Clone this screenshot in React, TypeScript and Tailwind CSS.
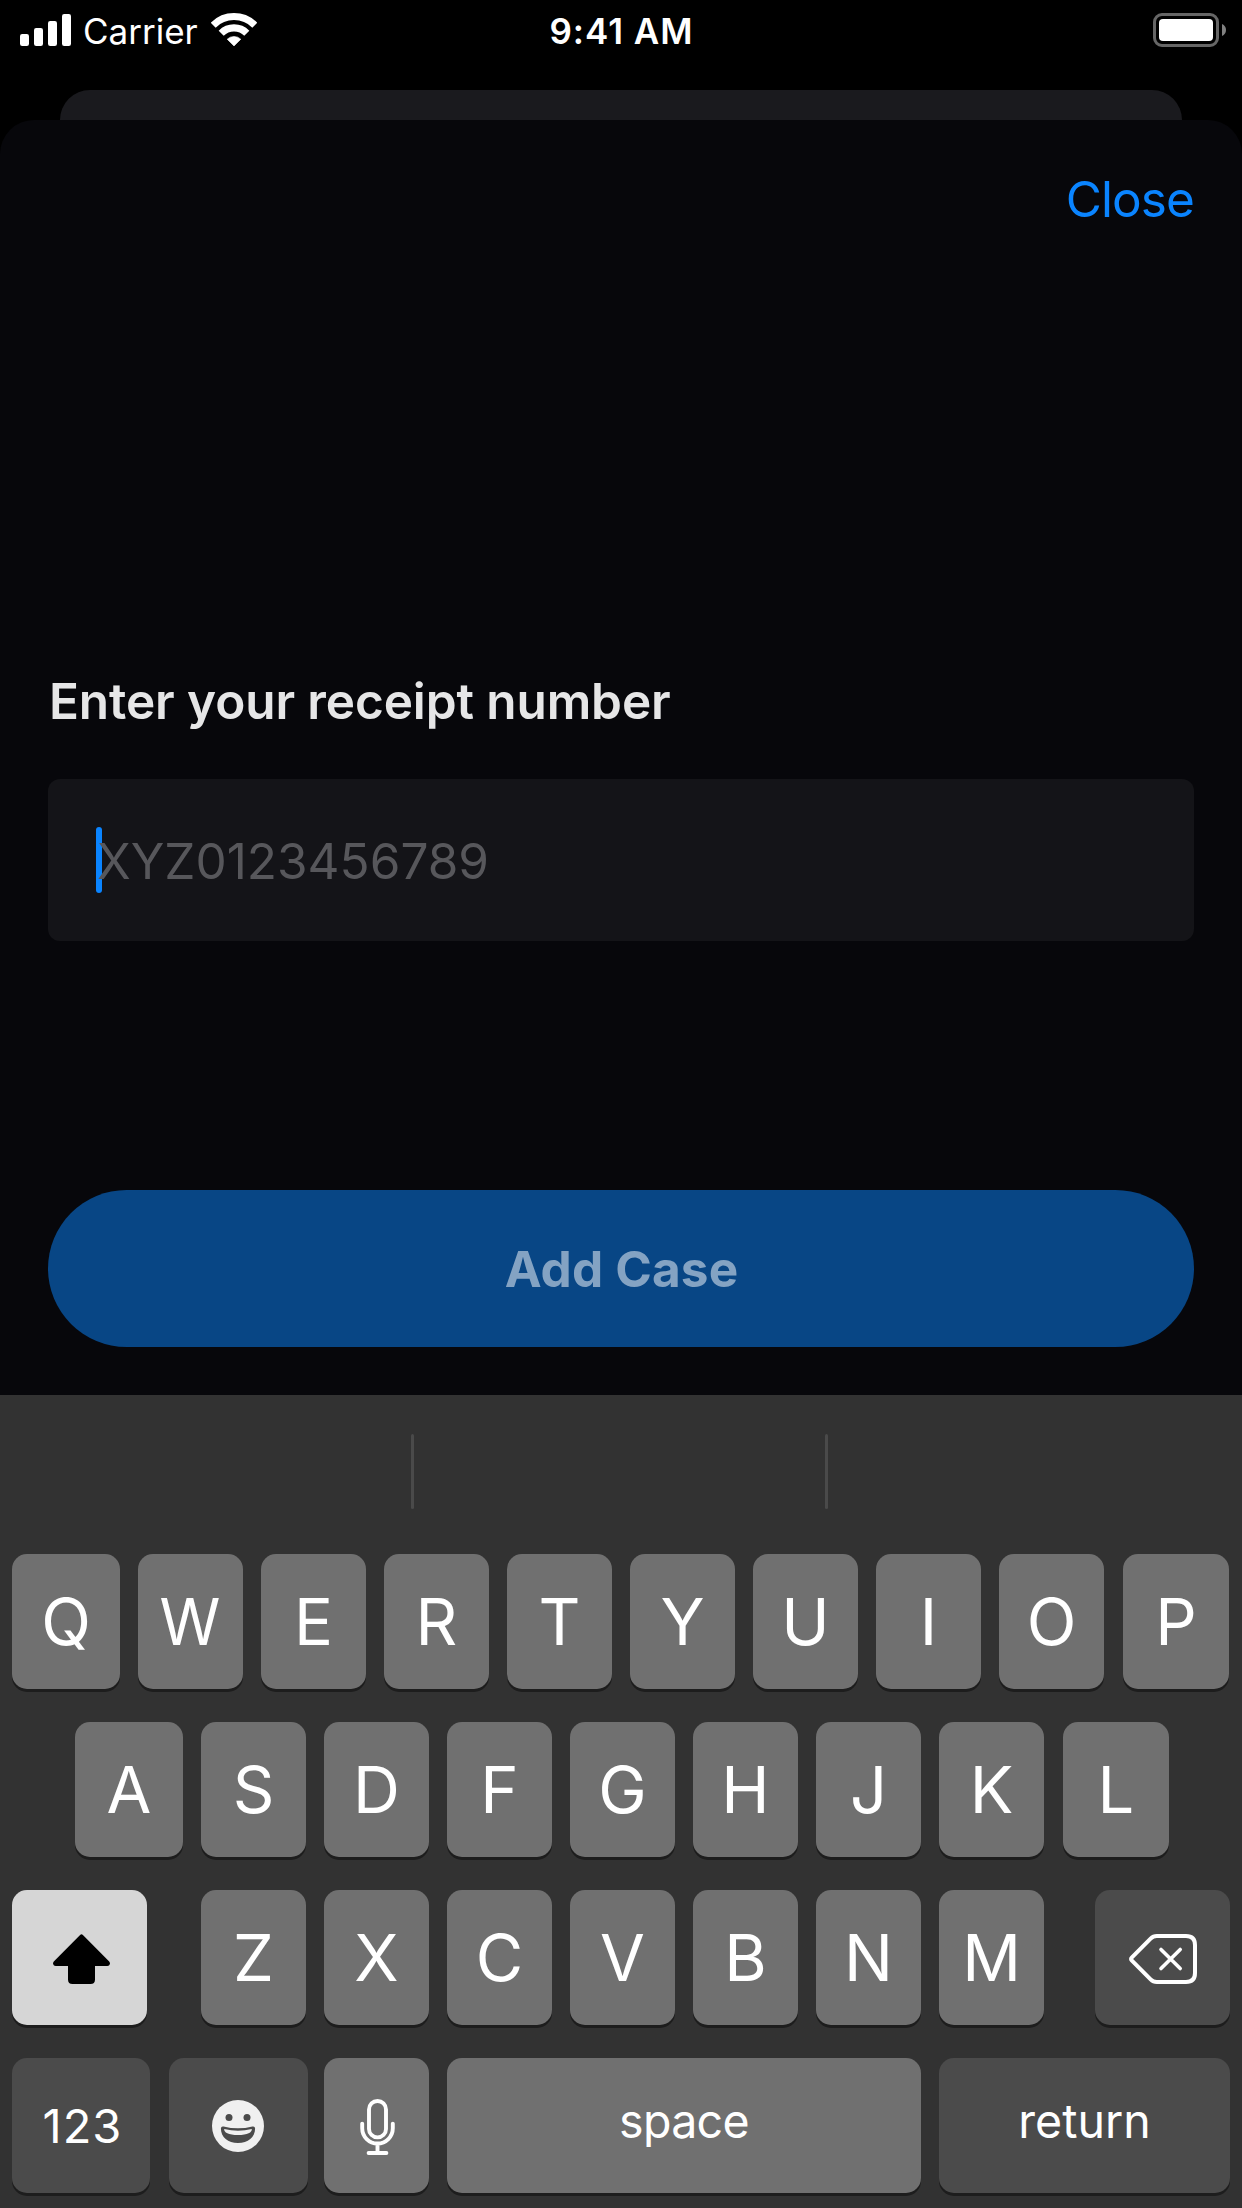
import React from "react";

const keyBase =
  "flex h-[135px] shrink-0 items-center justify-center rounded-[15px] shadow-[0_3px_0_#1d1d1d]";
const light = "bg-[#707070]";
const dark = "bg-[#4b4b4b]";

function Letter({ char, wide = "w-[105px]" }: { char: string; wide?: string }) {
  return (
    <div className={`${keyBase} ${light} ${wide} text-[65px] leading-none`}>
      <span className={char === "W" ? "scale-x-[0.95]" : ""}>{char}</span>
    </div>
  );
}

function SignalIcon() {
  return (
    <svg width="51" height="32" viewBox="0 0 51 32" fill="#fff">
      <rect x="0" y="20" width="9" height="12" rx="2.2" />
      <rect x="14" y="14" width="9" height="18" rx="2.2" />
      <rect x="28" y="7" width="9" height="25" rx="2.2" />
      <rect x="42" y="0" width="9" height="32" rx="2.2" />
    </svg>
  );
}

function WifiIcon() {
  return (
    <svg width="46" height="34" viewBox="0 0 46 34" fill="none" stroke="#fff">
      <path d="M2.2 12.2A29.4 29.4 0 0 1 43.8 12.2" strokeWidth="7" />
      <path d="M10.2 20.2A18.1 18.1 0 0 1 35.8 20.2" strokeWidth="7.2" />
      <path d="M23 33 16.2 26.2A9.8 9.8 0 0 1 29.8 26.2Z" fill="#fff" strokeWidth="0.6" />
    </svg>
  );
}

function BatteryIcon() {
  return (
    <svg width="73" height="34" viewBox="0 0 73 34">
      <rect x="1.5" y="1.5" width="63" height="31" rx="7.5" fill="none" stroke="#666" strokeWidth="3" />
      <rect x="6" y="6" width="54" height="22" rx="4" fill="#fff" />
      <path d="M69 11C71.6 12 73 14.4 73 17S71.6 22 69 23Z" fill="#808080" />
    </svg>
  );
}

function ShiftIcon() {
  return (
    <svg width="57" height="50" viewBox="0 0 57 50" fill="#000">
      <path d="M27.1 1Q28.5-.4 29.9 1L56.2 27.6Q57.2 28.7 56.9 30Q56.4 32 54.4 32H42V45.5Q42 50 37.5 50H19.5Q15 50 15 45.5V32H2.6Q.6 32 .1 30Q-.2 28.7 .8 27.6Z" />
    </svg>
  );
}

function BackspaceIcon() {
  return (
    <svg width="68" height="50" viewBox="0 0 68 50" fill="none" stroke="#fff" strokeLinecap="round" strokeLinejoin="round">
      <path d="M2.7 23.7 21.6 4.6Q24.2 2 27.8 2H57Q66 2 66 11V39Q66 48 57 48H27.8Q24.2 48 21.6 45.4L2.7 26.3Q1.4 25 2.7 23.7Z" strokeWidth="4" />
      <path d="M32 15.4 51.2 34.6M51.2 15.4 32 34.6" strokeWidth="3.6" />
    </svg>
  );
}

function EmojiIcon() {
  return (
    <svg width="52" height="52" viewBox="0 0 52 52">
      <circle cx="26" cy="26" r="26" fill="#f0f0f0" />
      <circle cx="17" cy="17.5" r="3.5" fill="#4b4b4b" />
      <circle cx="35" cy="17.5" r="3.5" fill="#4b4b4b" />
      <path d="M8.9 28.4Q9 26 11.6 26.5Q26 30.2 40.4 26.5Q43 26 43.1 28.4C43.1 37 36 43 26 43S8.9 37 8.9 28.4Z" fill="#4b4b4b" />
      <path d="M12.2 29Q26 32.4 39.8 29C40.3 32.4 35.5 35 26 35S11.7 32.4 12.2 29Z" fill="#f0f0f0" />
    </svg>
  );
}

function MicIcon() {
  return (
    <svg width="36" height="58" viewBox="0 0 36 58" fill="none" stroke="#fff" strokeWidth="3.9" strokeLinecap="round">
      <rect x="9" y="3" width="17" height="36.4" rx="8.5" />
      <path d="M2.2 25.6V30.2A15.3 15.3 0 0 0 32.8 30.2V25.6M17.5 45.5V55M8.6 55H26.4" />
    </svg>
  );
}

export default function App() {
  return (
    <div
      className="flex h-[2208px] w-[1242px] flex-col overflow-hidden bg-black text-white"
      style={{ fontFamily: 'Inter, "Liberation Sans", sans-serif' }}
    >
      <header className="grid h-[90px] shrink-0 grid-cols-3 items-start text-[35px] leading-[62px]">
        <div className="flex items-start pl-[20px]">
          <div className="pt-[14px]">
            <SignalIcon />
          </div>
          <span className="ml-[12px]">Carrier</span>
          <div className="ml-[13px] pt-[13px]">
            <WifiIcon />
          </div>
        </div>
        <div className="pl-[1px] text-center font-semibold tracking-[1px]">9:41 AM</div>
        <div className="flex justify-end pt-[13px] pr-[16px]">
          <BatteryIcon />
        </div>
      </header>

      <div className="mx-[60px] h-[30px] shrink-0 rounded-t-[30px] bg-[#1a1a1e]" />

      <main className="flex h-[1275px] shrink-0 flex-col rounded-t-[34px] bg-[#07070b] px-[48px] pt-[49px]">
        <button className="self-end text-[49.5px] leading-[60px] tracking-[-0.9px] text-[#0a84ff]">
          Close
        </button>
        <h1 className="mt-[442px] pl-[1px] text-[49.5px] leading-[60px] font-semibold tracking-[-0.1px] text-[#e6e6e7]">
          Enter your receipt number
        </h1>
        <div className="mt-[48px] flex h-[162px] shrink-0 items-center rounded-[12px] bg-[#141418] pl-[48px]">
          <div className="h-[66px] w-[6px] rounded-full bg-[#0a84ff]" />
          <span className="-ml-[5px] pt-[1px] text-[49.5px] leading-[60px] text-[#57575b]">
            XYZ0123456789
          </span>
        </div>
        <button className="mt-[249px] flex h-[157px] shrink-0 items-center justify-center rounded-full bg-[#084685] pt-[2px] pl-[1px] text-[49.5px] font-bold tracking-[0.15px] text-[#84a3c3]">
          Add Case
        </button>
      </main>

      <section className="flex h-[813px] shrink-0 flex-col bg-[#323232]">
        <div className="flex h-[159px] shrink-0 pt-[39px]">
          <div className="ml-[411px] h-[75px] w-[3px] rounded-full bg-[#4a4a4a]" />
          <div className="ml-[411px] h-[75px] w-[3px] rounded-full bg-[#4a4a4a]" />
        </div>
        <div className="flex flex-col gap-[33px]">
          <div className="flex gap-[18px] pl-[12px]">
            <Letter char="Q" wide="w-[108px]" />
            {["W", "E", "R", "T", "Y", "U", "I", "O"].map((c) => (
              <Letter key={c} char={c} />
            ))}
            <div className="pl-[1px]">
              <Letter char="P" wide="w-[106px]" />
            </div>
          </div>
          <div className="flex gap-[18px] pl-[75px]">
            <Letter char="A" wide="w-[108px]" />
            {["S", "D", "F", "G", "H", "J", "K"].map((c) => (
              <Letter key={c} char={c} />
            ))}
            <div className="pl-[1px]">
              <Letter char="L" wide="w-[106px]" />
            </div>
          </div>
          <div className="flex pl-[12px]">
            <div className={`${keyBase} w-[135px] bg-[#d6d6d6] pt-[3px] pl-[4px]`}>
              <ShiftIcon />
            </div>
            <div className="ml-[54px] flex gap-[18px]">
              {["Z", "X", "C", "V", "B", "N", "M"].map((c) => (
                <Letter key={c} char={c} />
              ))}
            </div>
            <div className={`${keyBase} ${dark} ml-[51px] w-[135px] pt-[3px]`}>
              <BackspaceIcon />
            </div>
          </div>
          <div className="flex pl-[12px] leading-none">
            <div className={`${keyBase} ${dark} w-[138px] pl-[3px] text-[47px] tracking-[1px]`}>123</div>
            <div className={`${keyBase} ${dark} ml-[19px] w-[139px] pr-[2px]`}>
              <EmojiIcon />
            </div>
            <div className={`${keyBase} ${light} ml-[16px] w-[105px] pt-[3px] pl-[2px]`}>
              <MicIcon />
            </div>
            <div className={`${keyBase} ${light} ml-[18px] w-[474px] pb-[9px] text-[46.5px] tracking-[-0.7px]`}>
              space
            </div>
            <div className={`${keyBase} ${dark} ml-[18px] w-[291px] pb-[9px] text-[46.5px]`}>return</div>
          </div>
        </div>
      </section>
    </div>
  );
}
